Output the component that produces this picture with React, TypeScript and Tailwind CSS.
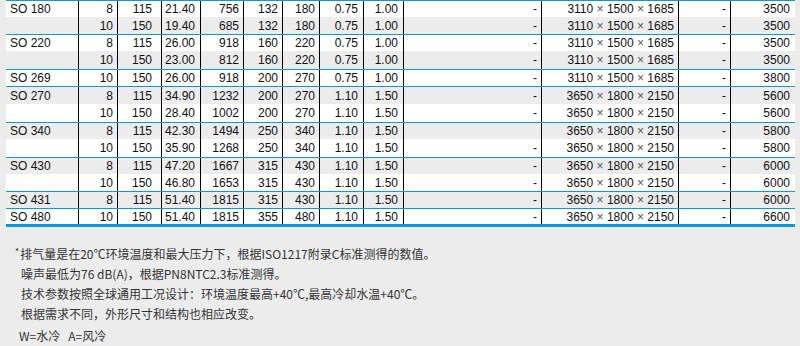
import React from "react";

/** One product line of the compressor spec table. */
type Row = {
  model: string;
  cells: string[];
  h: number;
  groupStart: boolean;
};

const DIM_A = "3110 × 1500 × 1685";
const DIM_B = "3650 × 1800 × 2150";

const rows: Row[] = [
  { model: "SO 180", cells: ["8", "115", "21.40", "756", "132", "180", "0.75", "1.00", "-", DIM_A, "-", "3500"], h: 17, groupStart: true },
  { model: "", cells: ["10", "150", "19.40", "685", "132", "180", "0.75", "1.00", "-", DIM_A, "-", "3500"], h: 17, groupStart: false },
  { model: "SO 220", cells: ["8", "115", "26.00", "918", "160", "220", "0.75", "1.00", "-", DIM_A, "-", "3500"], h: 17, groupStart: true },
  { model: "", cells: ["10", "150", "23.00", "812", "160", "220", "0.75", "1.00", "-", DIM_A, "-", "3500"], h: 18, groupStart: false },
  { model: "SO 269", cells: ["10", "150", "26.00", "918", "200", "270", "0.75", "1.00", "-", DIM_A, "-", "3800"], h: 17, groupStart: true },
  { model: "SO 270", cells: ["8", "115", "34.90", "1232", "200", "270", "1.10", "1.50", "-", DIM_B, "-", "5600"], h: 18, groupStart: true },
  { model: "", cells: ["10", "150", "28.40", "1002", "200", "270", "1.10", "1.50", "-", DIM_B, "-", "5600"], h: 18, groupStart: false },
  { model: "SO 340", cells: ["8", "115", "42.30", "1494", "250", "340", "1.10", "1.50", "", DIM_B, "-", "5800"], h: 17, groupStart: true },
  { model: "", cells: ["10", "150", "35.90", "1268", "250", "340", "1.10", "1.50", "-", DIM_B, "-", "5800"], h: 18, groupStart: false },
  { model: "SO 430", cells: ["8", "115", "47.20", "1667", "315", "430", "1.10", "1.50", "-", DIM_B, "-", "6000"], h: 17, groupStart: true },
  { model: "", cells: ["10", "150", "46.80", "1653", "315", "430", "1.10", "1.50", "-", DIM_B, "-", "6000"], h: 17, groupStart: false },
  { model: "SO 431", cells: ["8", "115", "51.40", "1815", "315", "430", "1.10", "1.50", "-", DIM_B, "-", "6000"], h: 17, groupStart: true },
  { model: "SO 480", cells: ["10", "150", "51.40", "1815", "355", "480", "1.10", "1.50", "-", DIM_B, "-", "6600"], h: 16, groupStart: true },
];

const cellPad = [
  "pr-[4px]",
  "pr-[9px]",
  "pr-[5px]",
  "pr-[4px]",
  "pr-[4px]",
  "pr-[4px]",
  "pr-[5px]",
  "pr-[5px]",
  "pr-[4px]",
  "pr-[4px]",
  "pr-[4px]",
  "pr-[5px]",
];

function Dims({ value }: { value: string }) {
  const parts = value.split(" × ");
  return (
    <span>
      {parts.map((p, i) => (
        <React.Fragment key={i}>
          {i > 0 && <span className="text-[#555]"> × </span>}
          {p}
        </React.Fragment>
      ))}
    </span>
  );
}

function SpecRow({ row, index }: { row: Row; index: number }) {
  return (
    <div
      className={
        "grid grid-cols-[73px_39px_44px_39px_43px_39px_37px_44px_40px_138px_137px_52px_64px] " +
        (index % 2 === 1 ? "bg-[#ececec] " : "bg-white ") +
        (row.groupStart ? "border-t border-[#0a9ad7]" : "")
      }
      style={{ height: row.h }}
    >
      <div className="border-r border-black pl-[4px] flex items-center">
        {row.model}
      </div>
      {row.cells.map((c, i) => (
        <div
          key={i}
          className={
            "flex items-center justify-end " +
            cellPad[i] +
            (i < row.cells.length - 1 ? " border-r border-black" : "")
          }
        >
          {i === 9 ? <Dims value={c} /> : c}
        </div>
      ))}
    </div>
  );
}

export default function App() {
  return (
    <div className="w-[800px] h-[346px] bg-[#ececec] overflow-hidden">
      <div className="ml-[6px] w-[789px] text-[12px] leading-none text-[#111] font-['Liberation_Sans',Arial,sans-serif]">
        {rows.map((r, i) => (
          <SpecRow key={i} row={r} index={i} />
        ))}
        <div className="h-[3px] bg-[#0a9ad7]" />
      </div>

      <div className="pt-[17px] pl-[21px] text-[12px] leading-[20px] text-[#333] font-['Noto_Sans_CJK_SC','Noto_Sans',sans-serif]">
        <p className="-ml-[6px]">
          <sup className="text-[9px] mr-[1px]">*</sup>
          排气量是在20℃环境温度和最大压力下，根据ISO1217附录C标准测得的数值。
        </p>
        <p>噪声最低为76 dB(A)，根据PN8NTC2.3标准测得。</p>
        <p>技术参数按照全球通用工况设计：环境温度最高+40℃,最高冷却水温+40℃。</p>
        <p>根据需求不同，外形尺寸和结构也相应改变。</p>
        <p className="mt-[2px] -ml-[2px]">W=水冷&nbsp;&nbsp;&nbsp;A=风冷</p>
      </div>
    </div>
  );
}
